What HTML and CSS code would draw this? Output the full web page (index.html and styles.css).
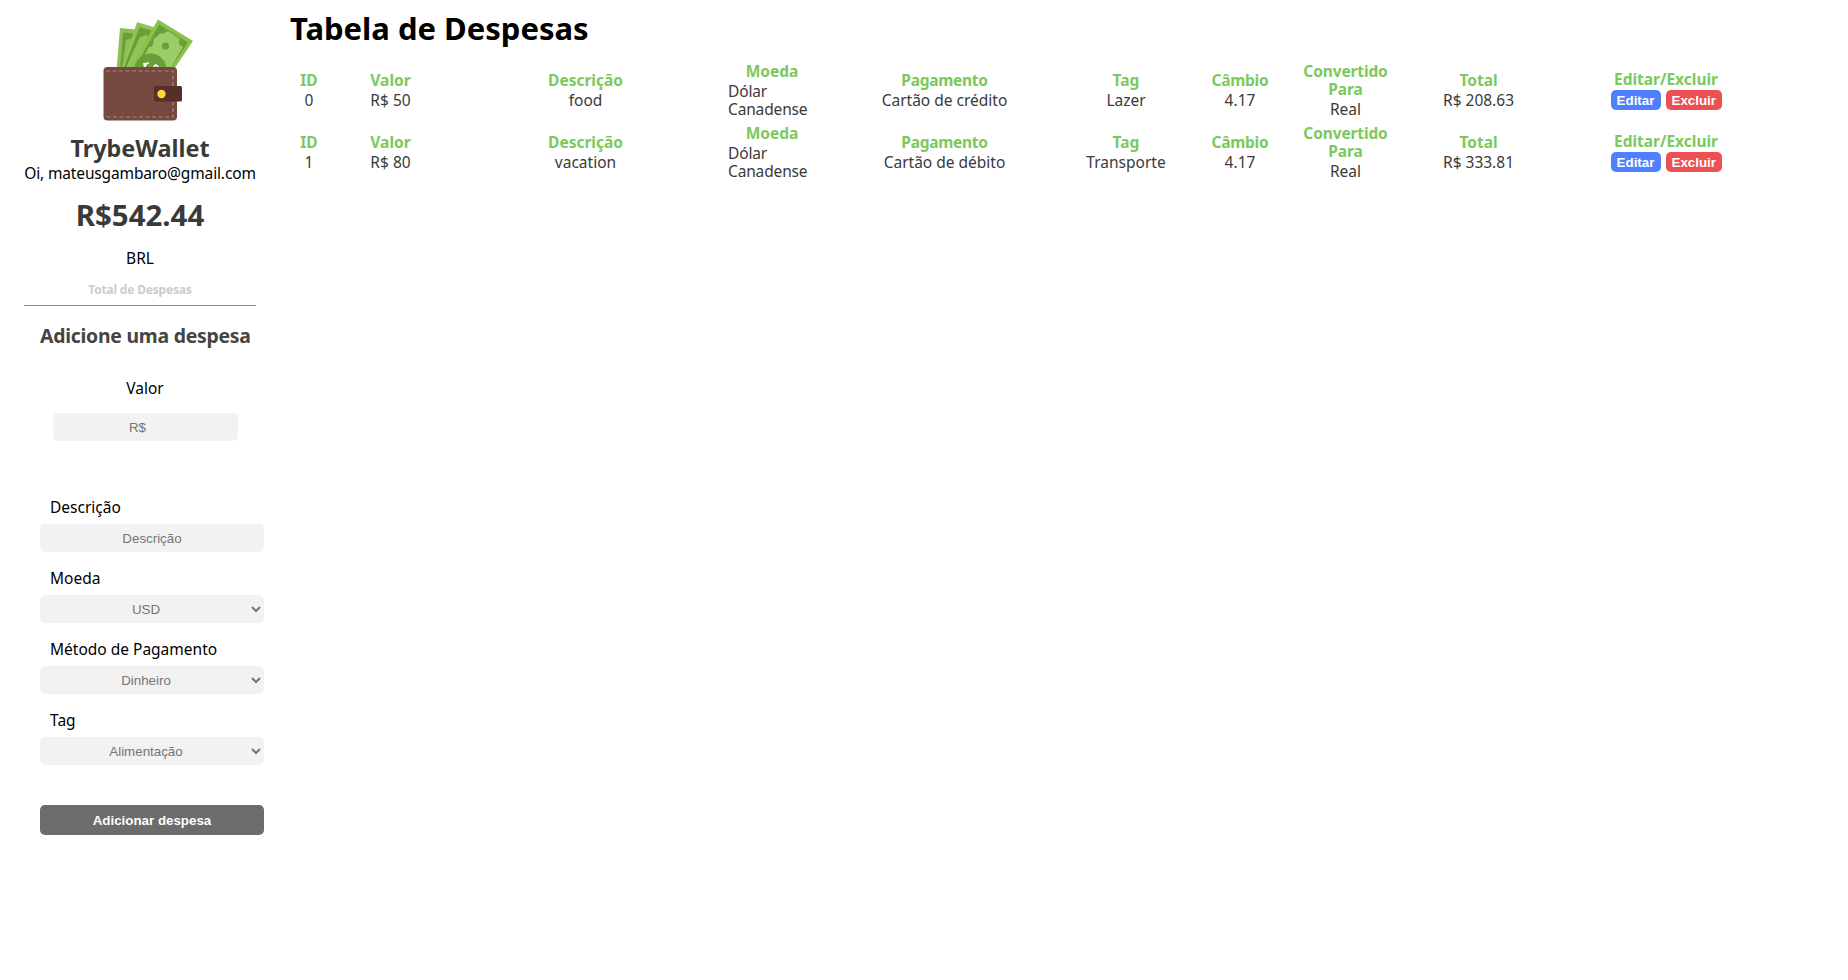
FILE: index.html
```
<!DOCTYPE html>
<html lang="pt-BR">
<head>
<meta charset="utf-8">
<title>TrybeWallet</title>
<link rel="stylesheet" href="styles.css">
</head>
<body>
<aside class="sidebar">
  <header class="profile">
    <svg class="logo" viewBox="0 0 120 120" aria-hidden="true">
      <g>
        <path d="M30 18l16 1.500-4 44-15.500-2z" fill="#8fbf55"/>
        <path d="M33 22.500l11 1-5 12-6 26h-3z" fill="#689f38"/>
        <path d="M36 30l6-2-6 32h-4z" fill="#8fbf55"/>
        <path d="M47 12l18 5.500-16 46-18-3z" fill="#93c45a"/>
        <path d="M49.500 17l12 3.500L46 62l-13-2z" fill="#689f38"/>
        <path d="M50 27c4 0 4-3 8-1L43 62l-8-2z" fill="#93c45a"/>
        <path d="M68 9.500l35 21.500L78 68 36 64z" fill="#8bc34a"/>
        <path d="M69 14.500l29 18L74 68l-32-5z" fill="#689f38"/>
        <path d="M70 23c3 2 6-1 8-2l12 8c-3 4 0 6 3 8L76 66 45 62l14-25c5 1 4-5 5-9 2 0 4-2 6-5z" fill="#9ccc65"/>
        <circle cx="60.500" cy="59.500" r="16" fill="#689f38"/>
        <circle cx="75.500" cy="36" r="3.600" fill="#689f38"/>
        <path d="M59 53l-5 1 1 3M57 53l-3 5M64 57c1-3 4-2 4 1" fill="none" stroke="#fff" stroke-width="1.700"/>
      </g>
      <rect x="13.500" y="57" width="73.500" height="53.500" rx="4" fill="#75493f"/>
      <path d="M16 61h67v46H16" fill="none" stroke="#a1887f" stroke-width="1.200" stroke-dasharray="4 2.500"/>
      <rect x="64" y="76" width="28" height="15.500" rx="1.500" fill="#553027"/>
      <circle cx="71.500" cy="84" r="4.200" fill="#fdd835"/>
    </svg>
    <h2 class="brand">TrybeWallet</h2>
    <p class="email">Oi, mateusgambaro@gmail.com</p>
    <p class="total">R$542.44</p>
    <p class="currency">BRL</p>
    <p class="caption">Total de Despesas</p>
  </header>
  <form class="form">
    <h3 class="form-title">Adicione uma despesa</h3>
    <label class="label label-value">Valor</label>
    <input class="field field-value" placeholder="R$">
    <label class="label">Descrição</label>
    <input class="field" placeholder="Descrição">
    <label class="label">Moeda</label>
    <select class="field"><option>USD</option></select>
    <label class="label">Método de Pagamento</label>
    <select class="field"><option>Dinheiro</option></select>
    <label class="label">Tag</label>
    <select class="field"><option>Alimentação</option></select>
    <button class="submit" type="button">Adicionar despesa</button>
  </form>
</aside>
<main class="content">
  <h1 class="title">Tabela de Despesas</h1>
  <section class="row">
    <div class="cell"><b>ID</b><span>0</span></div>
    <div class="cell"><b>Valor</b><span>R$ 50</span></div>
    <div class="cell"><b>Descrição</b><span>food</span></div>
    <div class="cell"><b>Moeda</b><span class="coin">Dólar Canadense</span></div>
    <div class="cell"><b class="tight">Pagamento</b><span>Cartão de crédito</span></div>
    <div class="cell"><b>Tag</b><span>Lazer</span></div>
    <div class="cell"><b class="tight">Câmbio</b><span>4.17</span></div>
    <div class="cell"><b class="two">Convertido Para</b><span>Real</span></div>
    <div class="cell"><b>Total</b><span>R$ 208.63</span></div>
    <div class="cell"><b>Editar/Excluir</b><div class="actions"><button class="btn edit">Editar</button><button class="btn delete">Excluir</button></div></div>
  </section>
  <section class="row">
    <div class="cell"><b>ID</b><span>1</span></div>
    <div class="cell"><b>Valor</b><span>R$ 80</span></div>
    <div class="cell"><b>Descrição</b><span>vacation</span></div>
    <div class="cell"><b>Moeda</b><span class="coin">Dólar Canadense</span></div>
    <div class="cell"><b class="tight">Pagamento</b><span>Cartão de débito</span></div>
    <div class="cell"><b>Tag</b><span>Transporte</span></div>
    <div class="cell"><b class="tight">Câmbio</b><span>4.17</span></div>
    <div class="cell"><b class="two">Convertido Para</b><span>Real</span></div>
    <div class="cell"><b>Total</b><span>R$ 333.81</span></div>
    <div class="cell"><b>Editar/Excluir</b><div class="actions"><button class="btn edit">Editar</button><button class="btn delete">Excluir</button></div></div>
  </section>
</main>
</body>
</html>
```
FILE: styles.css
```
* { box-sizing: border-box; }
body { margin: 0; display: flex; background: #fff; color: #000; font: 15.500px/18px "Noto Sans", sans-serif; }
h1, h2, h3, p { margin: 0; }
.sidebar { width: 290px; flex: none; padding-top: 10px; }
.profile { width: 232px; margin-left: 24px; display: flex; flex-direction: column; align-items: center; border-bottom: 1px solid #8c8c8c; height: 296px; white-space: nowrap; }
.logo { width: 120px; height: 120px; margin-left: 20px; flex: none; }
.brand { font-size: 23.400px; line-height: 28px; margin-top: 4px; color: #3a3a3a; }
.email { margin-top: 2px; letter-spacing: -0.140px; }
.total { font-size: 29.400px; line-height: 34px; font-weight: 700; color: #3a3a3a; margin-top: 16px; }
.currency { margin-top: 17px; }
.caption { font-size: 12px; line-height: 16px; font-weight: 700; letter-spacing: -0.180px; color: #ccc; margin-top: 15px; }
.form { width: 224px; margin-left: 40px; padding-top: 18px; display: flex; flex-direction: column; }
.form-title { font-size: 19.400px; line-height: 24px; letter-spacing: -0.240px; color: #444; white-space: nowrap; }
.label { margin: 17px 0 8px 10px; }
.label-value { margin: 31px 14px 16px 0; text-align: center; }
.field { width: 224px; height: 28px; border: 0; border-radius: 5px; background: #f2f2f2; color: #757575; font: 13.333px "Liberation Sans", Arial, sans-serif; text-align: center; text-align-last: center; padding: 1px 2px; }
.field::placeholder { color: #757575; }
.field-value { width: 185px; margin: 0 0 40px 13px; padding-right: 18px; }
.submit { height: 30px; margin-top: 40px; border: 0; border-radius: 5px; background: #6c6c6c; color: #fff; font: bold 13.333px "Liberation Sans", Arial, sans-serif; }
.title { font-size: 31px; line-height: 38px; padding-top: 9px; margin-bottom: 12px; }
.row { display: grid; grid-template-columns: 38px 125px 265px 108px 237px 126px 102px 109px 157px 218px; height: 62px; align-items: center; }
.cell { display: flex; flex-direction: column; align-items: center; gap: 2px; color: #3a3a3a; white-space: nowrap; }
.cell b { color: #7bc95c; }
.cell .tight { letter-spacing: -0.280px; }
.cell .two { width: 90px; white-space: normal; text-align: center; letter-spacing: -0.120px; }
.cell .coin { width: 88px; white-space: normal; letter-spacing: -0.150px; }
.actions { display: flex; gap: 5px; }
.btn { height: 20px; border: 0; border-radius: 5px; padding: 1px 6px; color: #fff; font: bold 13.333px "Liberation Sans", Arial, sans-serif; }
.edit { width: 50px; background: #4f80ff; }
.delete { width: 56px; background: #ec5053; }
```
